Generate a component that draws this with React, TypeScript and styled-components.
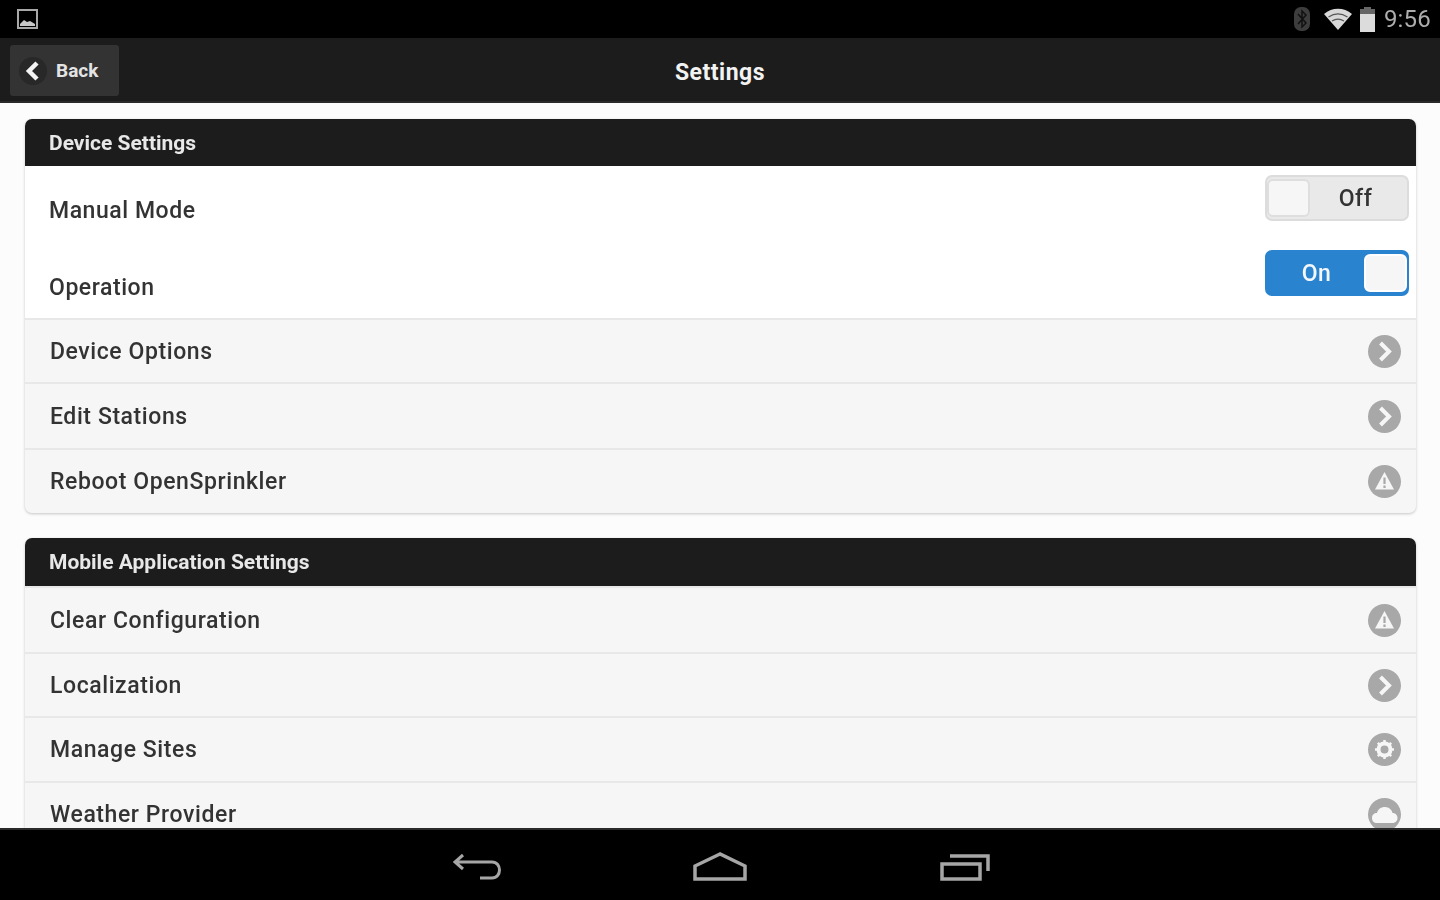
import styled, { createGlobalStyle } from 'styled-components';

const GlobalStyle = createGlobalStyle`
  html, body, #root {
    margin: 0;
    height: 100%;
  }
  body {
    font-family: Roboto, 'Liberation Sans', sans-serif;
    background: #000;
  }
`;

// the reference is an upscaled capture, everything in it is slightly soft
const Screen = styled.div`
  width: 1440px;
  height: 900px;
  display: flex;
  flex-direction: column;
  overflow: hidden;
  filter: blur(0.6px);
`;

const StatusBar = styled.div`
  height: 38px;
  flex: none;
  background: #000;
  display: flex;
  align-items: center;
  justify-content: space-between;
  padding: 0 9px 0 17px;
  color: #b4b4b4;
`;

const StatusIcons = styled.div`
  display: flex;
  align-items: center;
`;

const Clock = styled.span`
  font-size: 24px;
  margin-left: 8px;
  color: #adadad;
  letter-spacing: 0.2px;
`;

const Header = styled.header`
  height: 65px;
  flex: none;
  background: #1c1c1c;
  border-bottom: 2px solid #2a2a2a;
  box-sizing: border-box;
  position: relative;
  display: flex;
  align-items: center;
  justify-content: center;
  padding-top: 5px;
`;

const BackButton = styled.button`
  position: absolute;
  left: 10px;
  top: 7px;
  width: 109px;
  height: 51px;
  border: 0;
  border-radius: 3px;
  background: #333;
  color: #e4e4e4;
  font: 700 19px Roboto, sans-serif;
  display: flex;
  align-items: center;
  padding: 0 0 0 9px;
  gap: 9px;
`;

const BackBadge = styled.span`
  width: 28px;
  height: 28px;
  border-radius: 50%;
  background: #282828;
  display: flex;
  align-items: center;
  justify-content: center;
  flex: none;
`;

const Title = styled.h1`
  margin: 0;
  color: #f2f2f2;
  font-size: 23px;
  font-weight: 700;
  letter-spacing: 0.5px;
`;

const Content = styled.main`
  flex: 1;
  min-height: 0;
  overflow: hidden;
  background: #fcfcfc;
  padding: 16px 24px 0 25px;
  display: flex;
  flex-direction: column;
  gap: 24px;
`;

const Card = styled.section`
  flex: none;
  border-radius: 7px;
  background: #f6f6f6;
  box-shadow: 0 1px 3px rgba(0, 0, 0, 0.22);
  overflow: hidden;

  & + & {
    margin-top: 1px;
  }
`;

const CardHeading = styled.h2<{ $height: number }>`
  margin: 0;
  height: ${(p) => p.$height}px;
  padding-left: 24px;
  display: flex;
  align-items: center;
  background: #1c1c1c;
  color: #e8e8e8;
  font-size: 21px;
  font-weight: 700;
`;

const SwitchRow = styled.div<{ $height: number; $top: number }>`
  height: ${(p) => p.$height}px;
  box-sizing: border-box;
  background: #fff;
  display: flex;
  justify-content: space-between;
  padding: ${(p) => p.$top}px 7px 0 24px;
`;

const PlainLabel = styled.span<{ $top: number }>`
  margin-top: ${(p) => p.$top}px;
  font-size: 23px;
  line-height: 30px;
  font-weight: 500;
  letter-spacing: 0.55px;
  color: #333;
`;

const Toggle = styled.div<{ $on: boolean }>`
  width: 144px;
  height: 46px;
  box-sizing: border-box;
  border-radius: 7px;
  border: 2px solid ${(p) => (p.$on ? '#2a83cf' : '#dcdcdc')};
  background: ${(p) => (p.$on ? '#2a83cf' : '#e9e9e9')};
  color: ${(p) => (p.$on ? '#f4f8fc' : '#333')};
  display: flex;
  flex-direction: ${(p) => (p.$on ? 'row' : 'row-reverse')};
  align-items: center;
  font-size: 23px;
  font-weight: 500;
`;

const ToggleText = styled.span<{ $on: boolean }>`
  flex: 1;
  text-align: center;
  padding-left: ${(p) => (p.$on ? '2px' : '0')};
  padding-right: ${(p) => (p.$on ? '0' : '6px')};
  letter-spacing: 0.5px;
`;

const ToggleKnob = styled.span<{ $on: boolean }>`
  width: 43px;
  height: 38px;
  flex: none;
  border-radius: 6px;
  background: #f6f6f6;
  border: 2px solid ${(p) => (p.$on ? '#fff' : '#dedede')};
  box-sizing: border-box;
`;

const ListRow = styled.div<{ $height: number }>`
  height: ${(p) => p.$height}px;
  box-sizing: border-box;
  border-top: 2px solid #e8e8e8;
  padding: 0 15px 0 25px;
  display: flex;
  align-items: center;
  justify-content: space-between;
  font-size: 23px;
  font-weight: 500;
  letter-spacing: 0.58px;
  color: #333;
`;

const RowIcon = styled.span`
  width: 33px;
  height: 33px;
  flex: none;
  border-radius: 50%;
  background: #a8a8a8;
  display: flex;
  align-items: center;
  justify-content: center;
`;

const NavBar = styled.nav`
  height: 72px;
  flex: none;
  box-sizing: border-box;
  border-top: 2px solid #2a2a2a;
  background: #000;
  display: flex;
  align-items: center;
  justify-content: center;
  padding: 4px 0 0 3px;
`;

const NavSlot = styled.span<{ $gap: number }>`
  display: flex;
  margin-left: ${(p) => p.$gap}px;
`;

type IconKind = 'arrow' | 'alert' | 'gear' | 'cloud';

function Glyph({ kind }: { kind: IconKind }) {
  if (kind === 'arrow') {
    return (
      <svg width="33" height="33" viewBox="0 0 33 33">
        <path d="M12.500 8l8.500 8.500-8.500 8.500" fill="none" stroke="#f6f6f6" strokeWidth="4" />
      </svg>
    );
  }
  if (kind === 'alert') {
    return (
      <svg width="33" height="33" viewBox="0 0 33 33">
        <path d="M16.500 7L26 24.500H7z" fill="#f6f6f6" />
        <path d="M15.400 12.500h2.200v6.500h-2.200zM15.400 20.500h2.200V23h-2.200z" fill="#a8a8a8" />
      </svg>
    );
  }
  if (kind === 'gear') {
    return (
      <svg width="33" height="33" viewBox="0 0 33 33">
        <circle cx="16.500" cy="16.500" r="6" fill="none" stroke="#f6f6f6" strokeWidth="4" />
        <path
          d="M16.500 7v3M16.500 23v3M7 16.500h3M23 16.500h3M9.800 9.800l2.100 2.100M21.100 21.100l2.100 2.100M9.800 23.200l2.100-2.100M21.100 11.900l2.100-2.100"
          stroke="#f6f6f6"
          strokeWidth="2.500"
        />
      </svg>
    );
  }
  return (
    <svg width="33" height="33" viewBox="0 0 33 33">
      <path
        d="M9 25c-3 0-5-2-5-5s2-5 5-5c1-4 4-6 8-6s7 3 7.500 6c3 0 5 2.200 5 5s-2 5-5 5z"
        fill="#f6f6f6"
      />
    </svg>
  );
}

const deviceRows: { label: string; icon: IconKind; height: number }[] = [
  { label: 'Device Options', icon: 'arrow', height: 64 },
  { label: 'Edit Stations', icon: 'arrow', height: 66 },
  { label: 'Reboot OpenSprinkler', icon: 'alert', height: 65 },
];

const appRows: { label: string; icon: IconKind; height: number }[] = [
  { label: 'Clear Configuration', icon: 'alert', height: 66 },
  { label: 'Localization', icon: 'arrow', height: 64 },
  { label: 'Manage Sites', icon: 'gear', height: 65 },
  { label: 'Weather Provider', icon: 'cloud', height: 65 },
];

function Rows({ rows }: { rows: typeof deviceRows }) {
  return (
    <>
      {rows.map((row) => (
        <ListRow key={row.label} $height={row.height}>
          {row.label}
          <RowIcon>
            <Glyph kind={row.icon} />
          </RowIcon>
        </ListRow>
      ))}
    </>
  );
}

export default function App() {
  return (
    <Screen>
      <GlobalStyle />
      <StatusBar>
        <svg width="21" height="20" viewBox="0 0 21 20">
          <rect x="1" y="1" width="19" height="18" fill="none" stroke="#a8a8a8" strokeWidth="2" />
          <path d="M3 15l4-4 3 2 3-1 5 3v2H3z" fill="#c8c8c8" />
        </svg>
        <StatusIcons>
          <svg width="18" height="26" viewBox="0 0 18 26">
            <rect x="1" y="1" width="16" height="24" rx="7" fill="#3d3d3d" />
            <path d="M5 8l8 9-4 4V5l4 4-8 9" fill="none" stroke="#111" strokeWidth="1.500" />
          </svg>
          <svg width="30" height="24" viewBox="0 0 30 24" style={{ marginLeft: 12 }}>
            <path d="M1 7c8-7 20-7 28 0L15 23z" fill="#d8d8d8" />
            <path d="M5.500 10c6-4 13-4 19 0M9 14c4-2.500 8-2.500 12 0" fill="none" stroke="#555" strokeWidth="1.200" />
          </svg>
          <svg width="17" height="27" viewBox="0 0 17 27" style={{ marginLeft: 6 }}>
            <path d="M5 1h7v2h4v5H1V3h4z" fill="#666" />
            <rect x="1" y="8" width="15" height="18" fill="#dcdcdc" />
          </svg>
          <Clock>9:56</Clock>
        </StatusIcons>
      </StatusBar>

      <Header>
        <BackButton>
          <BackBadge>
            <svg width="20" height="24" viewBox="0 0 20 24">
              <path d="M14 4l-8 8 8 8" fill="none" stroke="#f4f4f4" strokeWidth="4.500" />
            </svg>
          </BackBadge>
          Back
        </BackButton>
        <Title>Settings</Title>
      </Header>

      <Content>
        <Card>
          <CardHeading $height={47}>Device Settings</CardHeading>
          <SwitchRow $height={77} $top={9}>
            <PlainLabel $top={21}>Manual Mode</PlainLabel>
            <Toggle $on={false}>
              <ToggleText $on={false}>Off</ToggleText>
              <ToggleKnob $on={false} />
            </Toggle>
          </SwitchRow>
          <SwitchRow $height={75} $top={7}>
            <PlainLabel $top={23}>Operation</PlainLabel>
            <Toggle $on>
              <ToggleText $on>On</ToggleText>
              <ToggleKnob $on />
            </Toggle>
          </SwitchRow>
          <Rows rows={deviceRows} />
        </Card>
        <Card>
          <CardHeading $height={48}>Mobile Application Settings</CardHeading>
          <Rows rows={appRows} />
        </Card>
      </Content>

      <NavBar>
        <svg width="50" height="30" viewBox="0 0 50 30">
          <path
            d="M10 3L2 10l8 7M2 10h37c10 0 10 16 0 16H27"
            fill="none"
            stroke="#a6a6a6"
            strokeWidth="3"
          />
        </svg>
        <NavSlot $gap={190}>
          <svg width="54" height="30" viewBox="0 0 54 30">
            <path d="M27 2L2 14v13h50V14z" fill="none" stroke="#a6a6a6" strokeWidth="3.500" />
          </svg>
        </NavSlot>
        <NavSlot $gap={193}>
          <svg width="50" height="30" viewBox="0 0 50 30">
            <rect x="2" y="12" width="38" height="15" fill="none" stroke="#a6a6a6" strokeWidth="3.500" />
            <path d="M10 4h38v15" fill="none" stroke="#a6a6a6" strokeWidth="3.500" />
          </svg>
        </NavSlot>
      </NavBar>
    </Screen>
  );
}
